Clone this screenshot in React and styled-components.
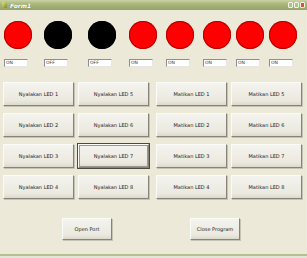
import React from 'react'
import styled, { createGlobalStyle } from "styled-components";

const GlobalStyle = createGlobalStyle`
html, body {
  margin: 0;
  padding: 0;
  background: #e4e6d8;
}
`;

const Window = styled.div`
width: 307px;
height: 256px;
background: #ece9d8;
display: flex;
flex-direction: column;
box-sizing: border-box;
border-bottom: 2px solid #b4c094;
font-family: Tahoma, "DejaVu Sans", "Liberation Sans", sans-serif;
`;

const TitleBar = styled.div`
height: 10px;
background: linear-gradient(to bottom, #c9d3a6 0%, #a9b67c 40%, #95a468 100%);
display: flex;
align-items: center;
padding: 0 2px;
`;

const TitleIcon = styled.div`
width: 5px;
height: 6px;
background: linear-gradient(135deg, #f4e27a, #6a8a2a);
border-radius: 1px 3px 1px 3px;
`;

const TitleText = styled.span`
color: #fff;
font-size: 6px;
font-style: italic;
font-weight: bold;
margin-left: 3px;
flex: 1;
text-shadow: 0 0 1px #6b7a40;
`;

const WinButton = styled.div`
width: 5px;
height: 6px;
margin-left: 1px;
border: 1px solid #f2f4e4;
box-sizing: border-box;
background: ${p => p.close ? "#d8552e" : "#b2c08a"};
border-radius: 1px;
`;

const Content = styled.div`
flex: 1;
display: flex;
flex-direction: column;
`;

const LedRow = styled.div`
display: flex;
margin-top: 11px;
`;

const LedCell = styled.div`
display: flex;
flex-direction: column;
margin-left: ${p => p.offset}px;
width: 28px;
`;

const Lamp = styled.div`
width: 28px;
height: 28px;
border-radius: 50%;
background: ${p => p.on ? "#ff0000" : "#000"};
box-shadow: inset 0 0 0 1px ${p => p.on ? "#b00000" : "#000"};
`;

const StateBox = styled.div`
width: 24px;
height: 8px;
margin-top: 10px;
box-sizing: border-box;
background: #fff;
border-top: 1px solid #8f8f8f;
border-left: 1px solid #8f8f8f;
border-right: 1px solid #e6e6e6;
border-bottom: 1px solid #e6e6e6;
font-size: 4.5px;
line-height: 6px;
color: #333;
padding-left: 1px;
`;

const ButtonGrid = styled.div`
display: flex;
margin-top: 15px;
padding-left: 3px;
gap: 7px;
`;

const Group = styled.div`
display: grid;
grid-template-columns: 71px 71px;
grid-auto-rows: 24px;
column-gap: 4px;
row-gap: 7px;
`;

const Button = styled.div`
box-sizing: border-box;
width: ${p => p.w || 71}px;
height: ${p => p.h || 24}px;
display: flex;
align-items: center;
justify-content: center;
font-size: 5px;
color: #222;
background: linear-gradient(to bottom, #f4f3ee 0%, #ebe9df 80%, #dcd9cc 100%);
border-top: 1px solid #fbfbf8;
border-left: 1px solid #fbfbf8;
border-right: 1px solid #85837a;
border-bottom: 1px solid #85837a;
box-shadow: ${p => p.focused ? "0 0 0 1px #4a4a44, inset 0 0 0 1px #9a988c" : "1px 1px 0 #c6c3b4"};
white-space: nowrap;
`;

const BottomRow = styled.div`
display: flex;
margin-top: 19px;
padding-left: 62px;
gap: 78px;
`;

const leds = [
  { on: true, offset: 4, label: "ON" },
  { on: false, offset: 12, label: "OFF" },
  { on: false, offset: 16, label: "OFF" },
  { on: true, offset: 13, label: "ON" },
  { on: true, offset: 9, label: "ON" },
  { on: true, offset: 9, label: "ON" },
  { on: true, offset: 5, label: "ON" },
  { on: true, offset: 5, label: "ON" },
];

function App() {
  return <>
    <GlobalStyle />
    <Window>
      <TitleBar>
        <TitleIcon />
        <TitleText>Form1</TitleText>
        <WinButton />
        <WinButton />
        <WinButton close />
      </TitleBar>
      <Content>
        <LedRow>
          {leds.map((l, i) => (
            <LedCell key={i} offset={l.offset}>
              <Lamp on={l.on} />
              <StateBox>{l.label}</StateBox>
            </LedCell>
          ))}
        </LedRow>
        <ButtonGrid>
          <Group>
            {[1, 2, 3, 4].map(n => [
              <Button key={"a" + n}>Nyalakan LED {n}</Button>,
              <Button key={"b" + n} focused={n === 3}>Nyalakan LED {n + 4}</Button>
            ])}
          </Group>
          <Group>
            {[1, 2, 3, 4].map(n => [
              <Button key={"c" + n}>Matikan LED {n}</Button>,
              <Button key={"d" + n}>Matikan LED {n + 4}</Button>
            ])}
          </Group>
        </ButtonGrid>
        <BottomRow>
          <Button w={50} h={22}>Open Port</Button>
          <Button w={50} h={22}>Close Program</Button>
        </BottomRow>
      </Content>
    </Window>
  </>
}
export default App;
